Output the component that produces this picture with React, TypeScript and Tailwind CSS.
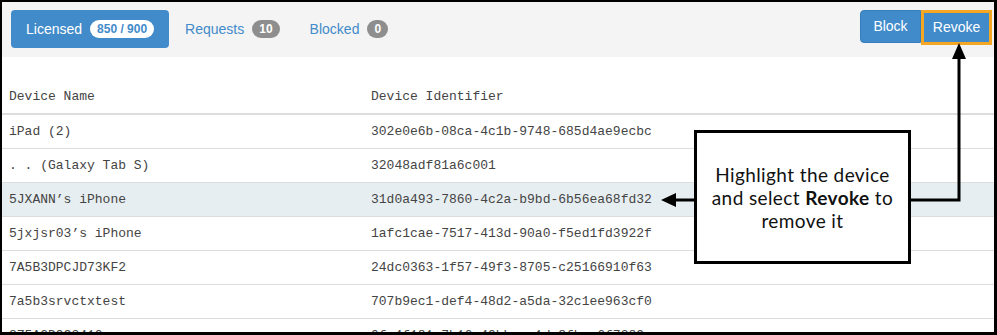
const rows = [
  { name: "iPad (2)", id: "302e0e6b-08ca-4c1b-9748-685d4ae9ecbc" },
  { name: ". . (Galaxy Tab S)", id: "32048adf81a6c001" },
  { name: "5JXANN’s iPhone", id: "31d0a493-7860-4c2a-b9bd-6b56ea68fd32", active: true },
  { name: "5jxjsr03’s iPhone", id: "1afc1cae-7517-413d-90a0-f5ed1fd3922f" },
  { name: "7A5B3DPCJD73KF2", id: "24dc0363-1f57-49f3-8705-c25166910f63" },
  { name: "7a5b3srvctxtest", id: "707b9ec1-def4-48d2-a5da-32c1ee963cf0" },
  { name: "8Z5A2D9C3410", id: "0fa4f181-7b16-49bb-ae1d-8fbca6f7389c" },
];

const Badge = ({ children, light }: { children: React.ReactNode; light?: boolean }) => (
  <span
    className={
      light
        ? "ml-2 rounded-full bg-white px-[7px] py-[1px] text-xs font-bold text-[#428bca]"
        : "ml-2 rounded-full bg-[#8e8e8e] px-[7px] py-[1px] text-xs font-bold text-white"
    }
  >
    {children}
  </span>
);

export default function App() {
  return (
    <div className="relative h-[335px] w-[997px] overflow-hidden border-t-2 border-l-2 border-r-[3px] border-b-[3px] border-black bg-white font-['Liberation_Sans',Arial,sans-serif]">
      <div className="flex h-[55px] items-start justify-between bg-[#f4f4f4] pl-[9px] pr-[2px] pt-2">
        <div className="flex items-center">
          <div className="flex h-[38px] items-center rounded-[4px] bg-[#428bca] px-[15px] text-[14px] text-white">
            Licensed
            <Badge light>850 / 900</Badge>
          </div>
          <div className="flex h-[38px] items-center pl-[16px] pr-[16px] text-[14px] text-[#428bca]">
            Requests
            <Badge>10</Badge>
          </div>
          <div className="flex h-[38px] items-center pl-[14px] text-[14px] text-[#428bca]">
            Blocked
            <Badge>0</Badge>
          </div>
        </div>
        <div className="flex items-start">
          <div className="flex h-[33px] w-[61px] items-center justify-center rounded-l-[4px] border border-[#357ebd] bg-[#428bca] text-[14px] text-white">
            Block
          </div>
          <div className="flex h-[35px] w-[71px] items-center justify-center border-[3px] border-[#f5a623] bg-[#428bca] text-[14px] text-white">
            Revoke
          </div>
        </div>
      </div>

      <div className="mt-6 font-['Liberation_Mono','Courier_New',monospace] text-[13px] text-[#444]">
        <div className="flex h-[34px] items-center border-b-2 border-[#dddddd] pl-[7px]">
          <div className="w-[362px]">Device Name</div>
          <div>Device Identifier</div>
        </div>
        {rows.map((r) => (
          <div
            key={r.id}
            className={`flex h-[34px] items-center border-b border-[#dddddd] pl-[7px] ${r.active ? "bg-[#e7eef1]" : ""}`}
          >
            <div className="w-[362px]">{r.name}</div>
            <div>{r.id}</div>
          </div>
        ))}
      </div>

      <svg className="pointer-events-none absolute left-0 top-0" width="997" height="335">
        <line x1="693" y1="198" x2="672" y2="198" stroke="#000" strokeWidth="3" />
        <polygon points="659,198 674,191 674,205" fill="#000" />
        <polyline points="908,198 957,198 957,55" fill="none" stroke="#000" strokeWidth="3" />
        <polygon points="957,41 950,57 964,57" fill="#000" />
      </svg>

      <div className="absolute left-[692px] top-[128px] flex h-[134px] w-[217px] items-center justify-center border-[3px] border-black bg-white text-center font-['Lato','Open_Sans',sans-serif] text-[19px] leading-[23px] tracking-[0.4px] text-[#111]">
        <p>
          Highlight the device
          <br />
          and select <b>Revoke</b> to
          <br />
          remove it
        </p>
      </div>
    </div>
  );
}
